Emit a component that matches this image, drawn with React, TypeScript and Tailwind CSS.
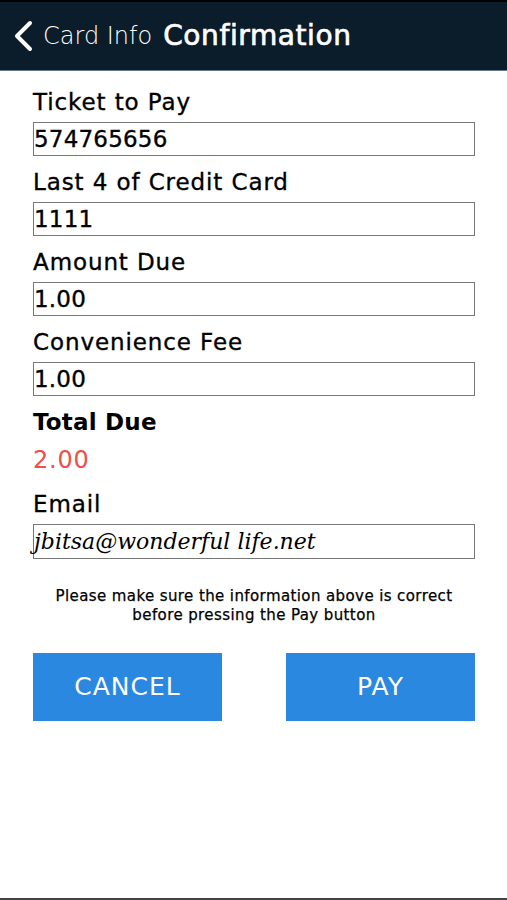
const sans = "font-['DejaVu_Sans',sans-serif]";
const thick = "[-webkit-text-stroke:0.35px_currentColor]";

function Field({ label, value }: { label: string; value: string }) {
  return (
    <div className="flex flex-col">
      <label className={`text-[23px] leading-[30px] mb-[5px] text-black tracking-[0.9px] ${thick}`}>{label}</label>
      <div className={`h-[34px] border border-[#777] flex items-center text-[23px] text-black leading-none tracking-[0.2px] ${thick}`}>
        {value}
      </div>
    </div>
  );
}

export default function App() {
  return (
    <div className={`h-[900px] bg-white flex flex-col border-b-2 border-[#444] ${sans}`}>
      <header className="h-[71px] shrink-0 border-t-2 border-black border-b border-b-[#6a7a88] bg-[#0b1d2b] flex items-center text-white">
        <svg width="24" height="32" viewBox="0 0 24 32" className="ml-[11px]" fill="none">
          <polyline points="19,3 6,16 19,29" stroke="white" strokeWidth="4" strokeLinecap="round" strokeLinejoin="round" />
        </svg>
        <span className="ml-[8px] text-[24px] font-light tracking-[0px]">Card Info</span>
        <span className="ml-[11px] text-[28px] tracking-[0.6px] [-webkit-text-stroke:0.7px_white]">Confirmation</span>
      </header>

      <main className="pl-[33px] pr-[32px] pt-[16px] flex flex-col">
        <div className="flex flex-col gap-[11px]">
          <Field label="Ticket to Pay" value="574765656" />
          <Field label="Last 4 of Credit Card" value="1111" />
          <Field label="Amount Due" value="1.00" />
          <Field label="Convenience Fee" value="1.00" />
          <div className="flex flex-col">
            <span className="text-[23px] leading-[30px] mb-[5px] font-bold tracking-[0.2px] text-black">Total Due</span>
            <span className="text-[24px] leading-[36px] tracking-[0.8px] text-[#ec5048]">2.00</span>
          </div>
          <div className="flex flex-col">
            <label className={`text-[23px] leading-[30px] mb-[5px] text-black tracking-[0.9px] ${thick}`}>Email</label>
            <div className="h-[35px] border border-[#777] flex items-center text-[22px] italic text-black font-['DejaVu_Serif',serif]">
              jbitsa@wonderful life.net
            </div>
          </div>
        </div>

        <p className="mt-[28px] text-center text-[15px] leading-[19px] tracking-[0.4px] text-black [-webkit-text-stroke:0.25px_black]">
          Please make sure the information above is correct
          <br />
          before pressing the Pay button
        </p>

        <div className="mt-[28px] flex justify-between">
          <button className="w-[189px] h-[68px] bg-[#2a88e0] text-white text-[25px] tracking-[1px]">CANCEL</button>
          <button className="w-[189px] h-[68px] bg-[#2a88e0] text-white text-[25px] tracking-[1px]">PAY</button>
        </div>
      </main>
    </div>
  );
}
